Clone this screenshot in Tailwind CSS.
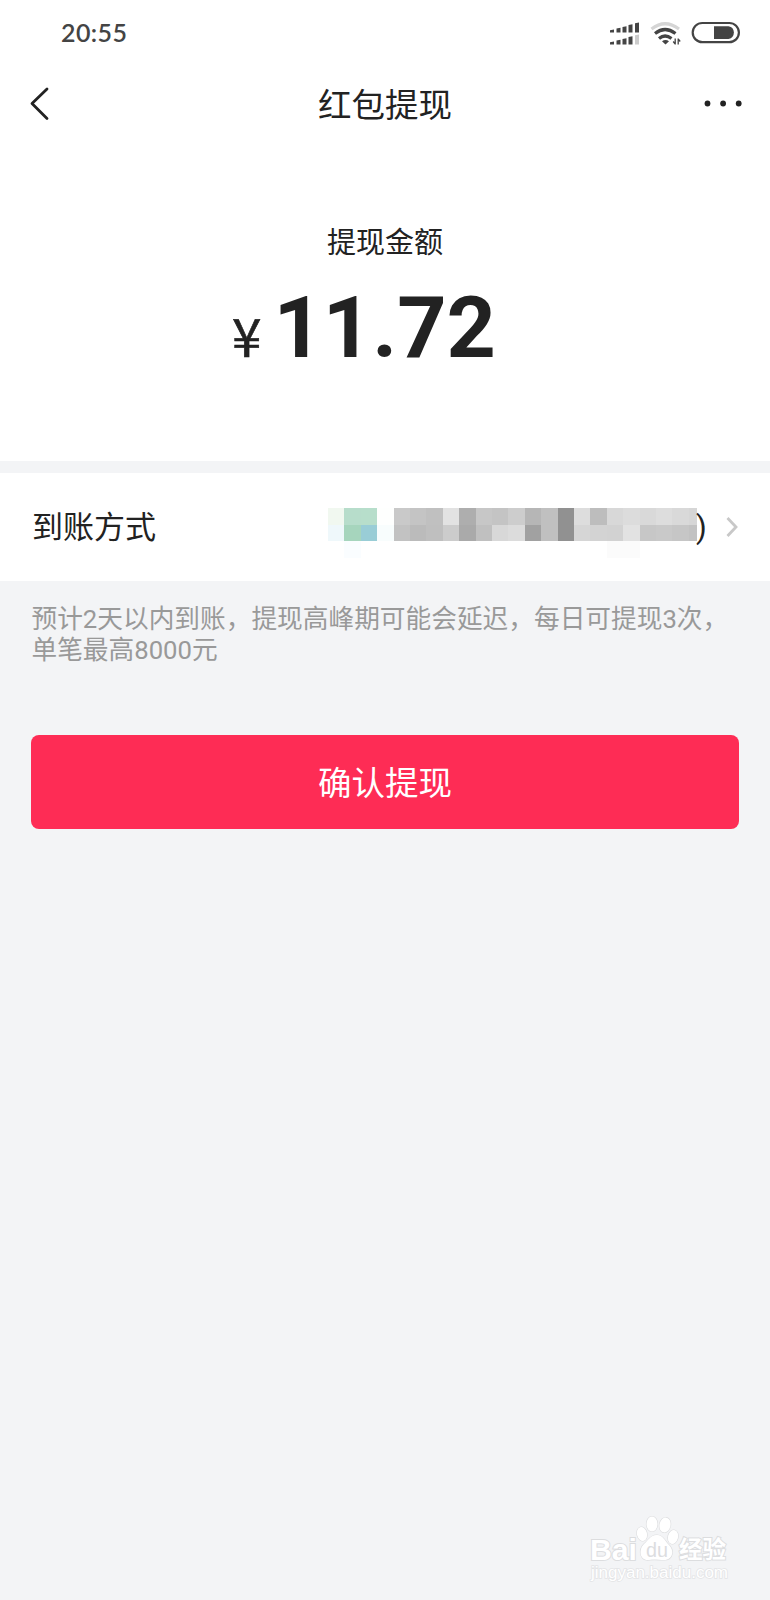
<!DOCTYPE html>
<html lang="zh-CN">

<head>
    <meta charset="UTF-8">
    <meta name="viewport" content="width=device-width, initial-scale=1.0">
    <title>红包提现</title>
    <script src="https://cdn.jsdelivr.net/npm/@tailwindcss/browser@4"></script>
</head>

<body class="bg-[#f3f4f6] font-['Roboto','Noto_Sans_CJK_SC',sans-serif] text-[#222]">
    <div class="w-[770px] h-[1600px] flex flex-col overflow-hidden">

        <!-- Top: status bar, header, amount -->
        <div class="h-[461px] bg-white shrink-0">
            <div class="h-16 pt-px pl-[61px] pr-[29px] flex items-center justify-between">
                <span class="font-['Lato',sans-serif] font-semibold text-[25px] leading-none tracking-[0.4px] text-[#444]">20:55</span>
                <svg class="w-[132px] h-6 overflow-visible" viewBox="0 0 132 24" fill="none">
                    <!-- signal -->
                    <g fill="#444">
                        <path d="M1 11.500h4V8.500l-4 .8zM7.500 11.500h4V6.800l-4 .8zM13.500 11.500h4V5.200l-4 .8zM19.500 11.500h4V3.200l-4 .8zM26 11.500h4V1.500l-4 .8z" />
                        <path d="M1 23.500h4v-3l-4 .8zM7.500 23.500h4v-4.700l-4 .8zM13.500 23.500h4v-6.300l-4 .8zM19.500 23.500h4v-8.300l-4 .8z" />
                        <path fill="#ccc" d="M26 23.500h4v-10l-4 .8z" />
                    </g>
                    <!-- wifi -->
                    <path d="M42.500 8Q56-2.500 70 8" stroke="#d5d5d5" stroke-width="3.200" />
                    <path d="M46 12.500Q56 4.500 66.500 12.500" stroke="#444" stroke-width="3.200" />
                    <path d="M50 17.500Q56 12.500 62.500 17.500" stroke="#444" stroke-width="3.200" />
                    <path d="M53 20.200q3.500-2.500 7 0L56.500 23.500z" fill="#444" />
                    <path d="M66.200 17.500v6M69.200 17.500v6M66.200 23l-2-2.500M69.200 18l2 2.500" stroke="#444" stroke-width="1.300" />
                    <!-- battery -->
                    <rect x="83.700" y="2" width="46.200" height="19.200" rx="9.600" stroke="#444" stroke-width="2.200" />
                    <path d="M105 5.200h14.500a6.500 6.500 0 0 1 0 12.800H105z" fill="#444" />
                </svg>
            </div>

            <div class="h-20 pl-[30px] pr-[28px] flex items-center justify-between">
                <svg class="w-10 h-9" viewBox="0 0 40 36" fill="none">
                    <path d="M17 3L2 17.500 17 32.500" stroke="#222" stroke-width="2.800" stroke-linecap="round" stroke-linejoin="round" />
                </svg>
                <h1 class="pt-1 pr-0.5 text-[33.500px] leading-none">红包提现</h1>
                <svg class="w-10 h-8" viewBox="0 0 40 32" fill="#222">
                    <circle cx="5.500" cy="15.500" r="2.900" />
                    <circle cx="21.100" cy="15.500" r="2.900" />
                    <circle cx="36.700" cy="15.500" r="2.900" />
                </svg>
            </div>

            <p class="mt-[83px] text-center text-[29px] leading-8">提现金额</p>
            <div class="mt-6 pl-[232px] flex items-baseline leading-[90px]">
                <span class="w-[41.500px] pt-px font-['Noto_Sans_CJK_SC',sans-serif] text-[53px] leading-none [-webkit-text-stroke:0.6px_#222]">¥</span>
                <span class="font-bold text-[86px]">11.72</span>
            </div>
        </div>

        <!-- Payout account -->
        <div class="mt-3 h-[108px] pl-8 pr-[32px] bg-white flex items-center shrink-0">
            <span class="text-[31px] leading-none">到账方式</span>
            <svg class="ml-auto w-[370px] h-[51px] mt-3" viewBox="0 0 370 51" id="mosaic"></svg>
            <span class="-ml-[2px] w-[10px] text-[31px] leading-none">)</span>
            <svg class="ml-[20px] w-3 h-[22px]" viewBox="0 0 12 22" fill="none">
                <path d="M1.500 2l8.500 9-8.500 9" stroke="#c8c8c8" stroke-width="2.800" />
            </svg>
        </div>

        <p class="mt-[23px] ml-[31.500px] h-[62px] text-[25.700px] leading-[30.500px] text-[#999] whitespace-nowrap">预计2天以内到账，提现高峰期可能会延迟，每日可提现3次，<br>单笔最高8000元</p>

        <button class="mt-[69px] mx-[31px] h-[94px] pt-1 rounded-lg bg-[#fe2c55] text-white text-[33.500px] leading-none shrink-0">确认提现</button>

        <!-- Watermark -->
        <svg class="mt-auto mb-[10px] ml-[580px] w-40 h-[85px] shrink-0" viewBox="0 0 160 85">
            <g fill="#fff" stroke="#dcdddf" stroke-width="1.200" paint-order="stroke" font-family="Liberation Sans, Noto Sans CJK SC, sans-serif">
                <ellipse cx="62" cy="29" rx="5" ry="7" transform="rotate(-15 62 29)" />
                <ellipse cx="72" cy="19" rx="5.500" ry="7.500" />
                <ellipse cx="85" cy="20" rx="5.500" ry="7.500" transform="rotate(12 85 20)" />
                <ellipse cx="93" cy="32" rx="5" ry="7" transform="rotate(15 93 32)" />
                <path d="M77 30c6 0 8 6 11 9 7 6 5 16-4 16-4 0-10-1-15 0-9 1-11-10-5-16 4-3 6-9 13-9z" />
                <text x="10" y="55" font-size="30" font-weight="700" textLength="47" lengthAdjust="spacingAndGlyphs" stroke-width="2">Bai</text>
                <text x="66" y="52" font-size="20" textLength="22" lengthAdjust="spacingAndGlyphs" fill="#dcdddf" stroke="none">du</text>
                <text x="99" y="53" font-size="23.500" font-weight="700" stroke-width="2">经验</text>
                <text x="11" y="73" font-size="16" textLength="137" lengthAdjust="spacingAndGlyphs" stroke="#e3e4e6" stroke-width="1.500">jingyan.baidu.com</text>
            </g>
        </svg>
    </div>

    <script>
        // Pixelated account name, one [top, bottom] pair per column
        const cells = [
            ["#f1f8f0", "#eff8fb"], ["#b7ddcb", "#a6d5bd"], ["#b7decb", "#99cdd6"], ["#fefffe", "#f8fdfd"],
            ["#c9c9c9", "#c2c2c2"], ["#c4c4c4", "#bbbbbb"], ["#c0c0c0", "#bfbfbf"], ["#e2e2e2", "#cccccc"],
            ["#aeaeae", "#aaaaaa"], ["#c7c7c7", "#c0c0c0"], ["#c4c4c4", "#d8d8d8"], ["#cdcdcd", "#dcdcdc"],
            ["#b6b6b6", "#a1a1a1"], ["#c0c0c0", "#c0c0c0"], ["#919191", "#919191"], ["#dddddd", "#d6d6d6"],
            ["#bdbdbd", "#d3d3d3"], ["#d8d8d8", "#d2d2d2"], ["#dcdcdc", "#e2e2e2"], ["#d9d9d9", "#c7c7c7"],
            ["#dddddd", "#c9c9c9"], ["#d9d9d9", "#c6c6c6"], ["#d6d6d6", "#c2c2c2"]
        ];
        const size = 16.4;
        const total = 369;
        let rects = "";
        cells.forEach((pair, col) => {
            const x = Math.round(col * size);
            const width = Math.min(Math.round((col + 1) * size), total) - x;
            rects += `<rect x="${x}" y="0" width="${width}" height="17" fill="${pair[0]}"/>`;
            rects += `<rect x="${x}" y="17" width="${width}" height="16" fill="${pair[1]}"/>`;
        });
        rects += `<rect x="16" y="33" width="17" height="17" fill="#fafdff"/><rect x="279" y="33" width="33" height="17" fill="#fbfbfb"/>`;
        document.getElementById("mosaic").innerHTML = rects;
    </script>
</body>

</html>
